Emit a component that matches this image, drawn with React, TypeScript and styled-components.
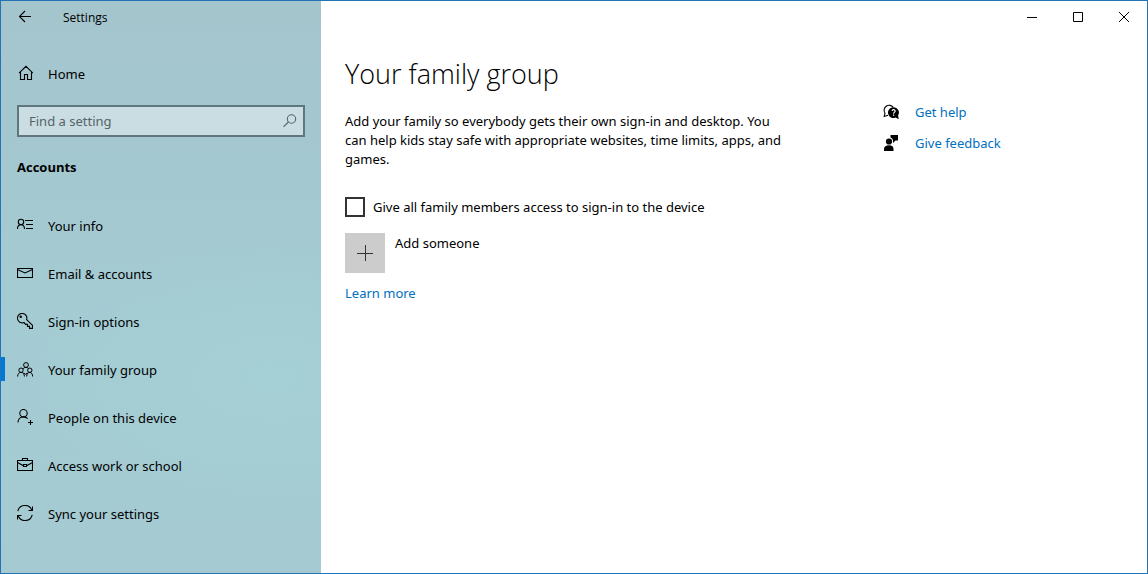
import React from 'react';
import styled, { createGlobalStyle } from 'styled-components';

const GlobalStyle = createGlobalStyle`
  *, *::before, *::after { box-sizing: border-box; }
  body {
    margin: 0;
    background: #fff;
    color: #000;
    font: 13px/20px "Segoe UI", "Noto Sans", "Open Sans", sans-serif;
  }
  button, input { font: inherit; color: inherit; }
`;

const Window = styled.div`
  display: grid;
  grid-template-columns: 320px minmax(0, 1fr);
  min-height: 100vh;
  border: 1px solid #2374b5;
`;

const Sidebar = styled.aside`
  background:
    radial-gradient(ellipse 260px 140px at 85% 66%, #a5d0d5 0%, #a5d0d500 100%),
    linear-gradient(180deg, #a5c5cd 0%, #a4c8d0 30%, #a4cbd3 62%, #a5cad2 100%);
`;

const TitleBar = styled.header`
  display: flex;
  align-items: center;
  height: 32px;
  font-family: "Segoe UI", "Open Sans", sans-serif;
  font-size: 12px;
`;

const Label = styled.span`
  padding-top: 2px;
`;

const BackButton = styled.button`
  display: grid;
  place-items: center;
  width: 48px;
  height: 32px;
  margin-right: 14px;
  padding: 0;
  border: 0;
  background: none;
`;

const Controls = styled(TitleBar)`
  justify-content: flex-end;
`;

const ControlButton = styled.button`
  display: grid;
  place-items: center;
  width: 46px;
  height: 32px;
  padding: 0;
  border: 0;
  background: none;
  &:hover { background: #e5e5e5; }
`;

const NavLink = styled.a<{ $current?: boolean }>`
  display: flex;
  align-items: center;
  gap: 15px;
  height: 48px;
  padding-left: 12px;
  border-left: 4px solid transparent;
  border-image: ${(p) =>
    p.$current
      ? 'linear-gradient(transparent 12px, #0078d7 12px, #0078d7 36px, transparent 36px) 0 0 0 4'
      : 'none'};
  color: #000;
  text-decoration: none;
`;

const HomeLink = styled(NavLink)`
  margin-top: 16px;
`;

const SearchBox = styled.label`
  display: flex;
  align-items: center;
  height: 32px;
  margin: 8px 16px 0;
  padding: 0 6px 0 10px;
  border: 2px solid #5f777c;
  background: #cadde2;
  color: #566367;
`;

const SearchInput = styled.input`
  flex: 1;
  min-width: 0;
  padding: 0;
  border: 0;
  outline: 0;
  background: none;
  &::placeholder { color: #566367; opacity: 1; }
`;

const SectionTitle = styled.h2`
  margin: 20px 16px 24px;
  font-family: "Segoe UI", "Open Sans", sans-serif;
  font-size: 13px;
  line-height: 20px;
  font-weight: 700;
`;

const NavList = styled.ul`
  margin: 0;
  padding: 0;
  list-style: none;
`;

const Content = styled.div`
  display: grid;
  grid-template-columns: minmax(0, 444px) minmax(0, 1fr);
  column-gap: 94px;
  padding: 21px 24px 24px;
`;

const PageTitle = styled.h1`
  margin: 0 0 18px;
  font-family: "Segoe UI", "Open Sans", sans-serif;
  font-size: 27px;
  line-height: 40px;
  font-weight: 300;
`;

const Intro = styled.p`
  margin: 0 0 28px;
  line-height: 19px;
`;

const CheckRow = styled.label`
  display: flex;
  align-items: center;
  gap: 8px;
`;

const Checkbox = styled.input`
  appearance: none;
  width: 20px;
  height: 20px;
  margin: 0;
  border: 2px solid #333;
  background: #fff;
  &:checked { background: #0078d7; }
`;

const AddButton = styled.button`
  display: flex;
  gap: 10px;
  margin: 16px 0 10px;
  padding: 0;
  border: 0;
  background: none;
`;

const AddTile = styled.span`
  display: grid;
  place-items: center;
  width: 40px;
  height: 40px;
  background: #ccc;
`;

const TextLink = styled.a`
  color: #0070c0;
  text-decoration: none;
`;

const Support = styled.nav`
  display: flex;
  flex-direction: column;
  gap: 11px;
  padding-top: 48px;
`;

const SupportLink = styled(TextLink)`
  display: flex;
  align-items: center;
  gap: 16px;
  svg { color: #000; }
`;

const Icon = ({ children }: { children: React.ReactNode }) => (
  <svg width="16" height="16" viewBox="0 0 16 16" fill="none" stroke="currentColor" strokeWidth="1.1" aria-hidden="true">
    {children}
  </svg>
);

const BackIcon = () => (
  <Icon><path d="M14 7.5H2.5M8 2L2.5 7.5L8 13" /></Icon>
);
const HomeIcon = () => (
  <Icon><path d="M2 8.2L9 1.3L16 8.2M3.5 7V14.5H7.5V9.5H10.5V14.5H14.5V7" /></Icon>
);
const SearchIcon = () => (
  <Icon><circle cx="10.5" cy="6" r="4.2" /><path d="M7.4 9L2.5 13.8" /></Icon>
);
const InfoIcon = () => (
  <Icon><circle cx="4" cy="5" r="2.7" /><path d="M.5 12C.5 9.4 2 7.8 4 7.8S7.5 9.4 7.5 12M8 3.5H16M9 7.5H16M9 11.5H16" /></Icon>
);
const MailIcon = () => (
  <Icon><path d="M.5 3.5H15.5V12.5H.5ZM.5 4.5L8 8L15.5 4.5" /></Icon>
);
const KeyIcon = () => (
  <Icon><path d="M9.6 6.7L15.5 12.4V15.4H12.5V13.4H10.5V11.4H8.7L6.9 9.5A4.7 4.7 0 1 1 9.6 6.7Z" /><circle cx="3.7" cy="3.8" r=".7" /></Icon>
);
const FamilyIcon = () => (
  <Icon>
    <g strokeWidth="1">
      <circle cx="9" cy="4" r="2.4" /><circle cx="4" cy="9.2" r="2.2" /><circle cx="12.8" cy="9.2" r="2.2" />
      <path d="M.6 15.5C.6 13 2 11.4 4 11.4S7.4 13 7.4 15.5M9.7 15.5C9.7 13 11 11.4 12.8 11.4S15.6 13 15.6 15.5M6 8C6.6 6.9 7.6 6.4 9 6.4C10.2 6.4 11 6.8 11.5 7.5M6.4 12L8.4 13.2L10.6 12" />
    </g>
  </Icon>
);
const PersonAddIcon = () => (
  <Icon><circle cx="6.5" cy="4.2" r="3.7" /><path d="M1 13.5C1 10 3.4 7.9 6.5 7.9C8.2 7.9 9.7 8.6 10.7 9.7M13.5 11V16M11 13.5H16" /></Icon>
);
const WorkIcon = () => (
  <Icon><path d="M.5 3.5H15.5V13.5H.5ZM5.5 3.5V1.5H10.5V3.5M.5 5.5L6 8.5M10 8.5L15.5 5.5M6.5 7.5H9.5V9.5H6.5Z" /></Icon>
);
const SyncIcon = () => (
  <Icon><path d="M.8 6.2A7.3 7.3 0 0 1 14.8 5.3M15.5 1.5V5.5H11.5M15.2 9.8A7.3 7.3 0 0 1 1.2 10.7M.5 14.5V10.5H4.5" /></Icon>
);
const HelpIcon = () => (
  <Icon>
    <path d="M5 11.2L1.2 12.4L2 9.2A5 5 0 1 1 10.2 3.4" />
    <path d="M10.7 3.2A5.3 5.3 0 0 1 15.1 11.3L15.7 15.3L12.6 13.5A5.4 5.4 0 1 1 10.7 3.2Z" fill="currentColor" stroke="none" />
    <path d="M9.1 6.9C9.3 5.2 12.3 5.3 12.1 7.2C12 8.1 10.6 8.2 10.6 9.7M10.6 10.6V11.8" stroke="#fff" strokeWidth="1.2" />
  </Icon>
);
const FeedbackIcon = () => (
  <Icon>
    <g fill="currentColor" stroke="none"><circle cx="6" cy="6.5" r="3.1" /><path d="M1 16V14C1 11.5 3 10.3 6 10.3S10.5 11.5 10.5 14V16ZM7.5 0H15V5.5H12.5L10 8V5.2A4 4 0 0 0 7.5 2.5Z" /></g>
  </Icon>
);

const sections = [
  { label: 'Your info', icon: InfoIcon },
  { label: 'Email & accounts', icon: MailIcon },
  { label: 'Sign-in options', icon: KeyIcon },
  { label: 'Your family group', icon: FamilyIcon, current: true },
  { label: 'People on this device', icon: PersonAddIcon },
  { label: 'Access work or school', icon: WorkIcon },
  { label: 'Sync your settings', icon: SyncIcon },
];

export default function App() {
  return (
    <>
      <GlobalStyle />
      <Window>
        <Sidebar>
          <TitleBar>
            <BackButton aria-label="Back"><BackIcon /></BackButton>
            <Label>Settings</Label>
          </TitleBar>
          <HomeLink href="#home"><HomeIcon /><Label>Home</Label></HomeLink>
          <SearchBox>
            <SearchInput type="text" placeholder="Find a setting" aria-label="Find a setting" />
            <SearchIcon />
          </SearchBox>
          <SectionTitle>Accounts</SectionTitle>
          <NavList>
            {sections.map(({ label, icon: Glyph, current }) => (
              <li key={label}>
                <NavLink href="#" $current={current} aria-current={current ? 'page' : undefined}>
                  <Glyph /><Label>{label}</Label>
                </NavLink>
              </li>
            ))}
          </NavList>
        </Sidebar>
        <div>
          <Controls>
            <ControlButton aria-label="Minimize">
              <svg width="10" height="10" stroke="#000"><path d="M0 5.5H10" /></svg>
            </ControlButton>
            <ControlButton aria-label="Maximize">
              <svg width="10" height="10" stroke="#000" fill="none"><path d="M.5 .5H9.5V9.5H.5Z" /></svg>
            </ControlButton>
            <ControlButton aria-label="Close">
              <svg width="10" height="10" stroke="#000"><path d="M0 0L10 10M10 0L0 10" /></svg>
            </ControlButton>
          </Controls>
          <Content>
            <main>
              <PageTitle>Your family group</PageTitle>
              <Intro>
                Add your family so everybody gets their own sign-in and desktop. You can help kids
                stay safe with appropriate websites, time limits, apps, and games.
              </Intro>
              <CheckRow>
                <Checkbox type="checkbox" />
                Give all family members access to sign-in to the device
              </CheckRow>
              <AddButton>
                <AddTile>
                  <svg width="16" height="16" stroke="#333" aria-hidden="true"><path d="M0 8.5H16M8.5 0V16" /></svg>
                </AddTile>
                Add someone
              </AddButton>
              <TextLink href="#learn">Learn more</TextLink>
            </main>
            <Support>
              <SupportLink href="#help"><HelpIcon />Get help</SupportLink>
              <SupportLink href="#feedback"><FeedbackIcon />Give feedback</SupportLink>
            </Support>
          </Content>
        </div>
      </Window>
    </>
  );
}
